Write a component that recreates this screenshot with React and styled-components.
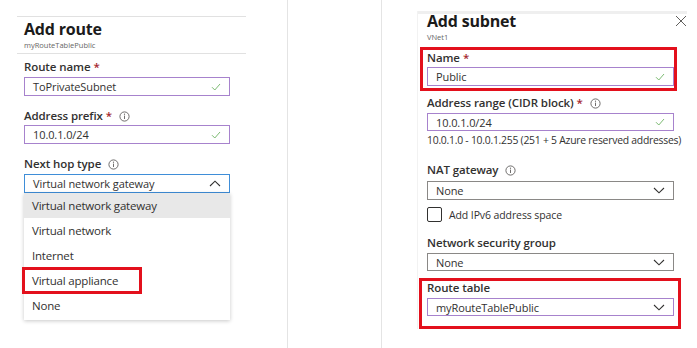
import React from 'react'
import styled, {createGlobalStyle} from 'styled-components'

const Global = createGlobalStyle`
    html, body {
        margin: 0;
        padding: 0;
        background: #fff;
    }
    body {
        font-family: "Open Sans", "Noto Sans", sans-serif;
        color: #323130;
    }
`

const Page = styled.div`
    display: flex;
    width: 697px;
    height: 348px;
    overflow: hidden;
    background: #fff;
`

const LeftPane = styled.div`
    width: 288px;
    box-sizing: border-box;
    border-right: 1px solid #e4e4e4;
    padding-top: 16px;
`

const Spacer = styled.div`
    width: 94px;
    box-sizing: border-box;
    border-right: 1px solid #e4e4e4;
`

const RightPane = styled.div`
    flex: 1;
    padding-top: 11px;
`

const Header = styled.div`
    margin-left: 17px;
    width: 229px;
    border-top: 1px solid #e1e1e1;
    border-bottom: 1px solid #e1e1e1;
    padding: 3px 0 3px 7px;
    box-sizing: border-box;
`

const Title = styled.div`
    font-size: 16px;
    font-weight: 700;
    line-height: 19px;
    letter-spacing: -0.2px;
    color: #1b1b1b;
`

const Sub = styled.div`
    font-size: 7.5px;
    line-height: 10px;
    margin-top: 1px;
    color: #666;
`

const Form = styled.div`
    padding: 6px 0 0 24px;
    width: 206px;
`

const Field = styled.div`
    margin-bottom: ${p => p.$gap ?? 13}px;
`

const Label = styled.div`
    display: flex;
    align-items: center;
    gap: 7px;
    font-size: 11.5px;
    font-weight: 600;
    line-height: 14px;
    letter-spacing: -0.1px;
    color: #323130;
    margin-bottom: ${p => p.$mb ?? 3}px;
    span.req {
        color: #a4262c;
        margin-left: 3px;
    }
`

const Box = styled.div`
    display: flex;
    align-items: center;
    justify-content: space-between;
    height: ${p => p.$h ?? 19}px;
    box-sizing: border-box;
    padding: 0 8px;
    border: 1px solid ${p => p.$tone === 'valid' ? '#a782cd' : p.$tone === 'open' ? '#3f8ed8' : '#8a8886'};
    font-size: 11px;
    letter-spacing: -0.1px;
    color: #323130;
    background: #fff;
`

const Menu = styled.div`
    box-shadow: 0 1px 4px rgba(0, 0, 0, 0.22);
    background: #fff;
    padding-bottom: 2px;
`

const Option = styled.div`
    height: 25px;
    display: flex;
    align-items: center;
    padding-left: 8px;
    font-size: 11.5px;
    letter-spacing: -0.2px;
    background: ${p => p.$active ? '#e8e8e8' : '#fff'};
`

const Marked = styled.span`
    display: inline-block;
    margin-left: -10px;
    padding: 3px 6px 3px 7px;
    border: 3px solid #e3101c;
    width: 120px;
    box-sizing: border-box;
`

const Blade = styled.div`
    margin-left: 36px;
    width: 269px;
    border-top: 3px solid #efefef;
    box-shadow: -1px 0 0 #f2f2f2;
    padding: 0 0 0 9px;
    box-sizing: border-box;
`

const BladeHead = styled.div`
    display: flex;
    justify-content: space-between;
    align-items: flex-start;
    margin-top: -2px;
    margin-bottom: 5px;
`

const Close = styled.button`
    border: 0;
    background: none;
    padding: 0;
    margin: 3px 0 0 0;
    display: flex;
`

const RightForm = styled.div`
    width: 247px;
`

const Highlight = styled.div`
    border: 3px solid #e3101c;
    margin: 0 -${p => p.$r}px 0 -${p => p.$l}px;
    padding: ${p => p.$t}px ${p => p.$r - 3}px ${p => p.$b}px ${p => p.$l - 3}px;
`

const Hint = styled.div`
    font-size: 10.4px;
    line-height: 14px;
    letter-spacing: -0.25px;
    margin-top: 2px;
    white-space: nowrap;
    color: #323130;
`

const CheckRow = styled.label`
    display: flex;
    align-items: center;
    gap: 7px;
    margin-top: 7px;
    font-size: 10.5px;
    letter-spacing: -0.1px;
`

const CheckBox = styled.span`
    width: 15px;
    height: 15px;
    box-sizing: border-box;
    border: 1px solid #323130;
    border-radius: 2px;
`

const Info = () => (
    <svg width="11" height="11" viewBox="0 0 11 11">
        <circle cx="5.5" cy="5.5" r="4.6" fill="none" stroke="#605e5c" strokeWidth="0.9" />
        <line x1="5.5" y1="4.6" x2="5.5" y2="8" stroke="#605e5c" strokeWidth="0.9" />
        <circle cx="5.5" cy="3.2" r="0.6" fill="#605e5c" />
    </svg>
)

const Check = () => (
    <svg width="10" height="8" viewBox="0 0 10 8">
        <path d="M1 4.2 L3.8 7 L9 1" fill="none" stroke="#7dbb73" strokeWidth="1" />
    </svg>
)

const Chevron = ({up}) => (
    <svg width="12" height="7" viewBox="0 0 12 7">
        <path d={up ? 'M1 6 L6 1.2 L11 6' : 'M1 1 L6 5.8 L11 1'} fill="none" stroke="#323130" strokeWidth="1.1" />
    </svg>
)

const Req = () => <span className="req">*</span>

const App = () => {
    const hops = ['Virtual network gateway', 'Virtual network', 'Internet', 'Virtual appliance', 'None']
    return (
        <Page>
            <Global />
            <LeftPane>
                <Header>
                    <Title>Add route</Title>
                    <Sub>myRouteTablePublic</Sub>
                </Header>
                <Form>
                    <Field>
                        <Label><span>Route name<Req /></span></Label>
                        <Box $tone="valid">ToPrivateSubnet<Check /></Box>
                    </Field>
                    <Field>
                        <Label $mb={2}><span>Address prefix<Req /></span><Info /></Label>
                        <Box $tone="valid">10.0.1.0/24<Check /></Box>
                    </Field>
                    <Field $gap={0}>
                        <Label><span>Next hop type</span><Info /></Label>
                        <Box $tone="open">Virtual network gateway<Chevron up /></Box>
                        <Menu>
                            {hops.map((h, i) => (
                                <Option key={h} $active={i === 0}>
                                    {h === 'Virtual appliance' ? <Marked>{h}</Marked> : h}
                                </Option>
                            ))}
                        </Menu>
                    </Field>
                </Form>
            </LeftPane>
            <Spacer />
            <RightPane>
                <Blade>
                    <BladeHead>
                        <div>
                            <Title>Add subnet</Title>
                            <Sub>VNet1</Sub>
                        </div>
                        <Close aria-label="close">
                            <svg width="12" height="12" viewBox="0 0 12 12">
                                <path d="M1 1 L11 11 M11 1 L1 11" stroke="#605e5c" strokeWidth="1" />
                            </svg>
                        </Close>
                    </BladeHead>
                    <RightForm>
                        <Field $gap={5}>
                            <Highlight $l={7} $r={3} $t={1} $b={2}>
                                <Label $mb={2}><span>Name<Req /></span></Label>
                                <Box $tone="valid">Public<Check /></Box>
                            </Highlight>
                        </Field>
                        <Field $gap={16}>
                            <Label><span>Address range (CIDR block)<Req /></span><Info /></Label>
                            <Box $tone="valid" $h={18}>10.0.1.0/24<Check /></Box>
                            <Hint>10.0.1.0 - 10.0.1.255 (251 + 5 Azure reserved addresses)</Hint>
                        </Field>
                        <Field $gap={14}>
                            <Label $mb={4}><span>NAT gateway</span><Info /></Label>
                            <Box>None<Chevron /></Box>
                            <CheckRow><CheckBox />Add IPv6 address space</CheckRow>
                        </Field>
                        <Field $gap={7}>
                            <Label>Network security group</Label>
                            <Box $h={18}>None<Chevron /></Box>
                        </Field>
                        <Highlight $l={8} $r={7} $t={0} $b={10}>
                            <Label>Route table</Label>
                            <Box $tone="valid" $h={18}>myRouteTablePublic<Chevron /></Box>
                        </Highlight>
                    </RightForm>
                </Blade>
            </RightPane>
        </Page>
    )
}

export default App
